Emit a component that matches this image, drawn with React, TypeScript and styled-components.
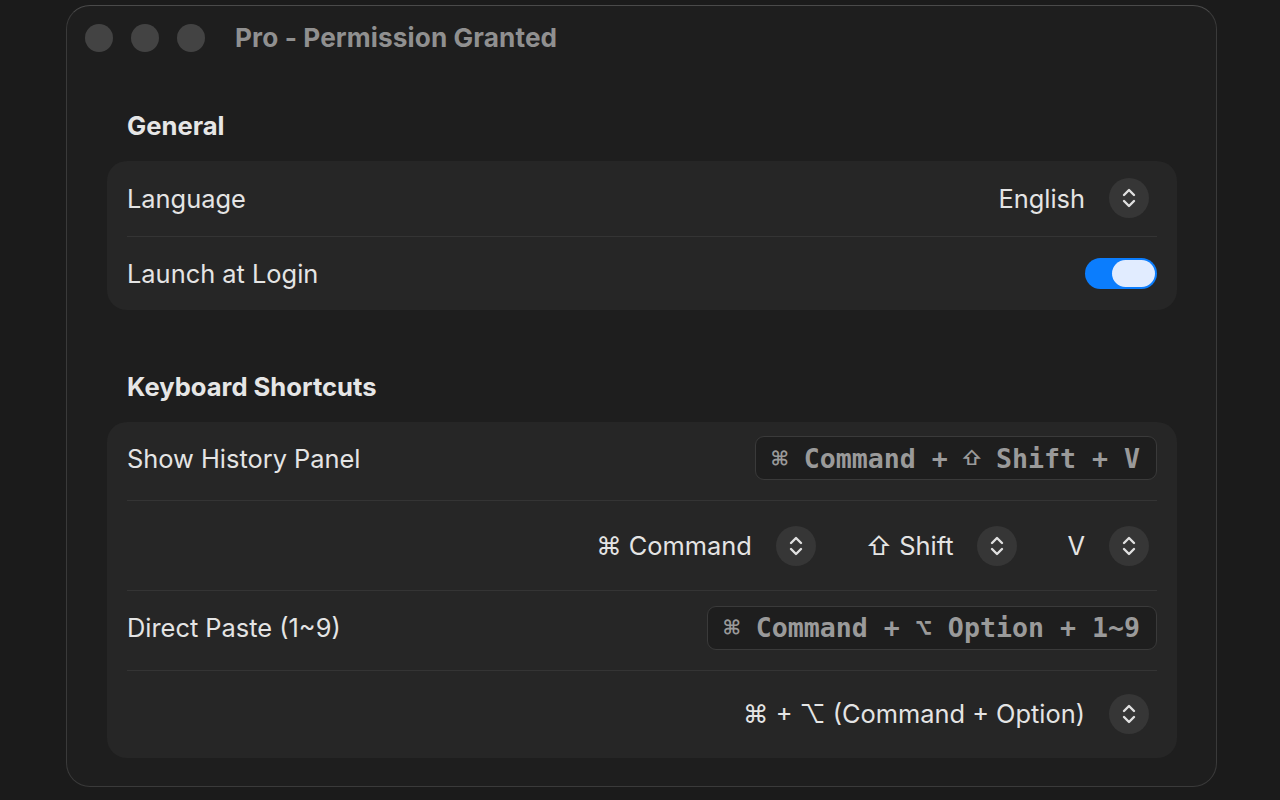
import React from "react";
import styled, { createGlobalStyle } from "styled-components";

const GlobalStyle = createGlobalStyle`
  html, body {
    margin: 0;
    padding: 0;
    background: #1b1b1b;
  }
  body {
    font-family: Inter, "Noto Sans", "DejaVu Sans", sans-serif;
    -webkit-font-smoothing: antialiased;
  }
  * { box-sizing: border-box; }
`;

const Screen = styled.div`
  width: 1280px;
  height: 800px;
  padding: 5px 0 0 66px;
  overflow: hidden;
`;

const Window = styled.div`
  width: 1151px;
  height: 782px;
  border-radius: 24px;
  background: #1e1e1e;
  border: 1px solid #3a3a3a;
  border-top-color: #4a4a4a;
  display: flex;
  flex-direction: column;
  overflow: hidden;
`;

const TitleBar = styled.div`
  height: 65px;
  display: flex;
  align-items: center;
  padding-left: 18px;
  padding-bottom: 2px;
  flex-shrink: 0;
`;

const Lights = styled.div`
  display: flex;
  gap: 18px;
  margin-right: 30px;
`;

const Light = styled.span`
  width: 28px;
  height: 28px;
  border-radius: 50%;
  background: #434343;
`;

const Title = styled.div`
  font-size: 26.2px;
  font-weight: 700;
  color: #909090;
  letter-spacing: 0.1px;
`;

const Content = styled.div`
  padding: 40px 39px 0 40px;
  display: flex;
  flex-direction: column;
`;

const SectionTitle = styled.div<{ $top?: number }>`
  font-size: 25.6px;
  font-weight: 700;
  color: #e6e6e6;
  line-height: 30px;
  padding-left: 20px;
  margin-top: ${(p) => p.$top ?? 0}px;
  margin-bottom: 20px;
`;

const Card = styled.div`
  background: #262626;
  border-radius: 20px;
  padding: 0 20px;
  display: flex;
  flex-direction: column;
`;

const Row = styled.div<{ $h: number; $pb?: number }>`
  height: ${(p) => p.$h}px;
  display: flex;
  align-items: center;
  justify-content: space-between;
  padding-bottom: ${(p) => p.$pb ?? 0}px;
  & + & {
    border-top: 1px solid #343434;
  }
`;

const Label = styled.span`
  font-size: 25.4px;
  color: #e4e4e4;
`;

const Controls = styled.div`
  margin-left: auto;
  display: flex;
  align-items: center;
  gap: 42px;
`;

const Popup = styled.div`
  display: flex;
  align-items: center;
  gap: 24px;
  padding-right: 8px;
`;

const PopupText = styled.span`
  font-size: 25.4px;
  color: #e4e4e4;
`;

const Stepper = styled.span`
  width: 40px;
  height: 40px;
  border-radius: 50%;
  background: #363636;
  display: flex;
  align-items: center;
  justify-content: center;
`;

const Toggle = styled.span<{ $on: boolean }>`
  width: 72px;
  height: 31px;
  border-radius: 16px;
  background: ${(p) => (p.$on ? "#0b7dfd" : "#3a3a3a")};
  display: flex;
  align-items: center;
  justify-content: ${(p) => (p.$on ? "flex-end" : "flex-start")};
  padding: 0 2px;
`;

const Knob = styled.span`
  width: 43px;
  height: 27px;
  border-radius: 14px;
  background: #e1ecff;
`;

const KeyCombo = styled.span`
  font-family: "DejaVu Sans Mono", "Liberation Mono", monospace;
  font-size: 26.6px;
  font-weight: 700;
  color: #9a9a9a;
  height: 44px;
  display: flex;
  align-items: center;
  padding: 0 16px;
  border-radius: 9px;
  border: 1.5px solid #3a3a3a;
  background: #1e1e1e;
  white-space: pre;
`;

/* modifier glyph set in the UI face, centred in a three-cell slot
   (space, glyph, space) so the monospace grid stays intact */
const KeySym = styled.span`
  font-family: Inter, "DejaVu Sans", sans-serif;
  font-weight: 600;
  font-size: 20px;
  display: inline-block;
  width: 48px;
  text-align: center;
`;

const Chevrons = () => (
  <svg width="16" height="22" viewBox="0 0 16 22" fill="none">
    <path
      d="M3 8 L8 3 L13 8 M3 14 L8 19 L13 14"
      stroke="#e0e0e0"
      strokeWidth="2.4"
      strokeLinecap="round"
      strokeLinejoin="round"
    />
  </svg>
);

const Select = ({ value }: { value: string }) => (
  <Popup>
    <PopupText>{value}</PopupText>
    <Stepper>
      <Chevrons />
    </Stepper>
  </Popup>
);

export default function App() {
  return (
    <>
      <GlobalStyle />
      <Screen>
        <Window>
          <TitleBar>
            <Lights>
              <Light />
              <Light />
              <Light />
            </Lights>
            <Title>Pro - Permission Granted</Title>
          </TitleBar>
          <Content>
            <SectionTitle>General</SectionTitle>
            <Card>
              <Row $h={75} $pb={1}>
                <Label>Language</Label>
                <Controls>
                  <Select value="English" />
                </Controls>
              </Row>
              <Row $h={74}>
                <Label>Launch at Login</Label>
                <Toggle $on>
                  <Knob />
                </Toggle>
              </Row>
            </Card>

            <SectionTitle $top={62}>Keyboard Shortcuts</SectionTitle>
            <Card>
              <Row $h={78} $pb={6}>
                <Label>Show History Panel</Label>
                <KeyCombo>
                  {"⌘ Command +"}
                  <KeySym>⇧</KeySym>
                  {"Shift + V"}
                </KeyCombo>
              </Row>
              <Row $h={90}>
                <Controls>
                  <Select value="⌘ Command" />
                  <Select value="⇧ Shift" />
                  <Select value="V" />
                </Controls>
              </Row>
              <Row $h={80} $pb={6}>
                <Label>Direct Paste (1~9)</Label>
                <KeyCombo>⌘ Command + ⌥ Option + 1~9</KeyCombo>
              </Row>
              <Row $h={88} $pb={2}>
                <Controls>
                  <Select value="⌘ + ⌥ (Command + Option)" />
                </Controls>
              </Row>
            </Card>
          </Content>
        </Window>
      </Screen>
    </>
  );
}
